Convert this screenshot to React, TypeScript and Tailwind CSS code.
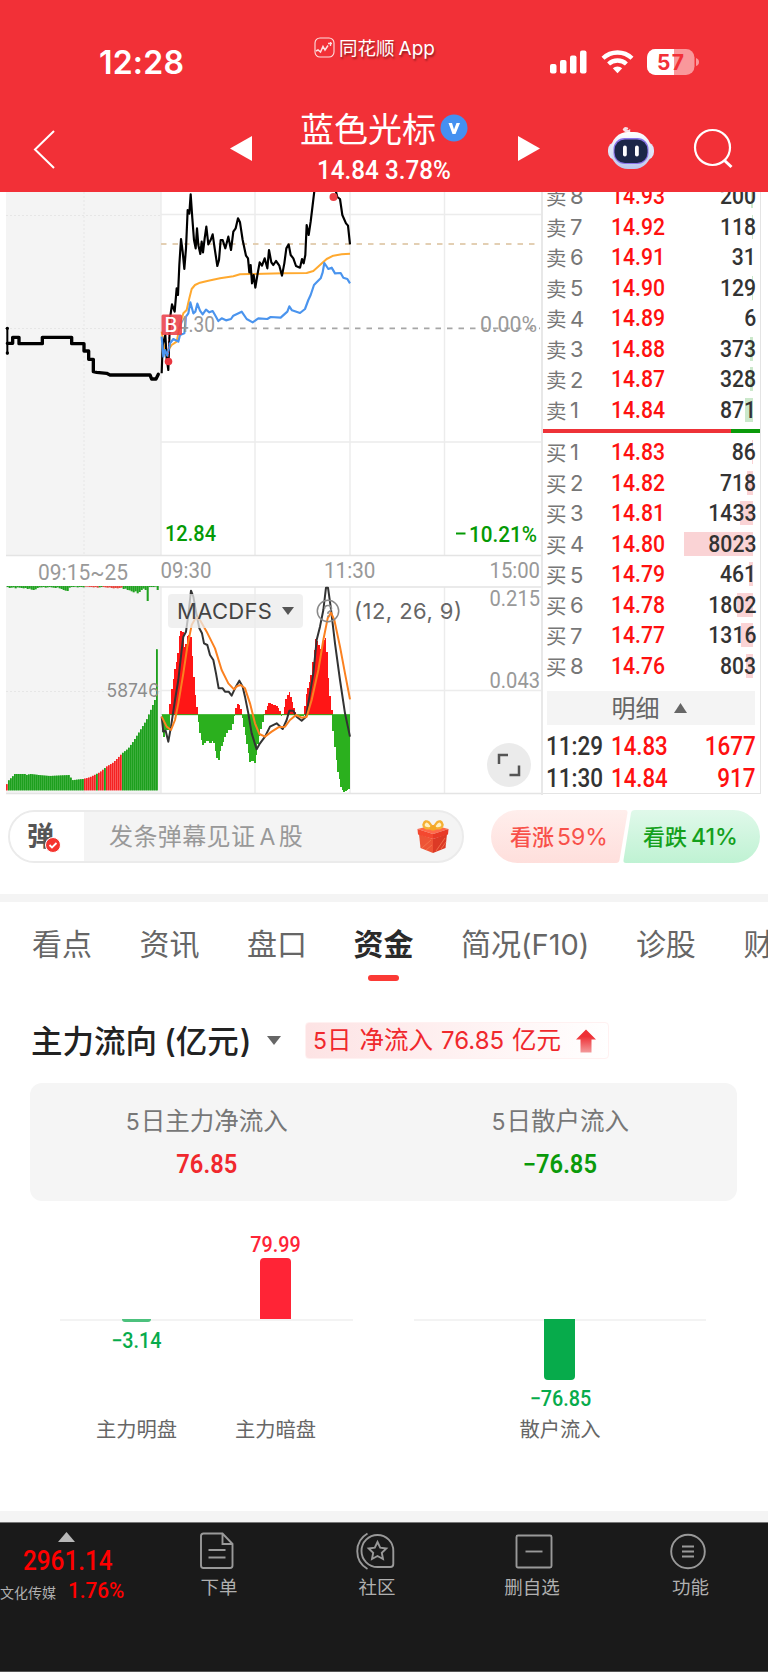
import React from "react";

interface Quote {
  label: string;
  no: number;
  price: string;
  volume: string;
  bar: number;
}

const asks: Quote[] = [
  { label: "卖", no: 8, price: "14.93", volume: "200", bar: 2 },
  { label: "卖", no: 7, price: "14.92", volume: "118", bar: 1 },
  { label: "卖", no: 6, price: "14.91", volume: "31", bar: 0 },
  { label: "卖", no: 5, price: "14.90", volume: "129", bar: 1 },
  { label: "卖", no: 4, price: "14.89", volume: "6", bar: 0 },
  { label: "卖", no: 3, price: "14.88", volume: "373", bar: 3 },
  { label: "卖", no: 2, price: "14.87", volume: "328", bar: 3 },
  { label: "卖", no: 1, price: "14.84", volume: "871", bar: 8 },
];

const bids: Quote[] = [
  { label: "买", no: 1, price: "14.83", volume: "86", bar: 1 },
  { label: "买", no: 2, price: "14.82", volume: "718", bar: 6 },
  { label: "买", no: 3, price: "14.81", volume: "1433", bar: 13 },
  { label: "买", no: 4, price: "14.80", volume: "8023", bar: 69 },
  { label: "买", no: 5, price: "14.79", volume: "461", bar: 4 },
  { label: "买", no: 6, price: "14.78", volume: "1802", bar: 16 },
  { label: "买", no: 7, price: "14.77", volume: "1316", bar: 12 },
  { label: "买", no: 8, price: "14.76", volume: "803", bar: 7 },
];

const trades = [
  { time: "11:29", price: "14.83", volume: "1677" },
  { time: "11:30", price: "14.84", volume: "917" },
];

const priceLine =
  "35,565 38,480 46,450 50,520 55,555 60,400 66,358 74,380 80,310 84,330 88,240 93,162 98,200 103,252 108,190 113,75 118,86 122,28 127,100 132,165 137,190 141,130 145,180 151,207 155,170 159,202 164,160 169,125 175,178 182,165 188,148 194,190 202,243 207,225 212,165 218,165 226,190 235,155 243,195 250,140 257,130 264,100 270,112 278,165 288,212 294,220 298,262 302,240 306,295 311,270 316,308 323,265 329,232 336,242 344,220 352,250 357,195 364,232 370,240 378,228 388,242 396,272 403,235 409,190 416,178 422,210 430,220 438,243 450,248 456,222 461,235 466,210 470,120 476,150 482,110 488,60 494,10 520,-40 550,-10 562,36 570,42 577,90 588,115 594,122 600,178";

const averageLine =
  "35,440 45,500 55,495 65,480 80,470 90,420 100,385 110,375 118,340 125,312 135,300 150,293 175,287 210,280 250,274 270,268 300,267 400,265 470,264 490,258 510,240 530,222 550,212 575,208 600,206";

const indexLine =
  "35,455 40,515 45,495 52,512 60,475 70,462 85,470 90,450 103,445 108,395 115,385 121,352 130,385 136,380 142,356 150,377 158,388 168,374 178,382 188,378 195,390 205,408 215,400 228,406 243,402 250,392 275,380 290,402 308,412 325,400 352,402 362,396 392,398 412,380 418,364 426,376 450,384 465,372 475,345 482,330 492,300 500,292 512,280 518,262 523,234 535,252 545,248 555,265 572,264 580,278 592,282 600,295";

const auctionLine =
  "22,475 38,475 38,457 57,457 57,476 127,476 127,457 215,457 215,476 252,476 252,498 266,498 266,523 280,523 280,560 290,562 320,565 330,570 450,570 455,582 468,582 475,568";

const difLine =
  "485,530 490,575 497,572 505,605 513,560 525,480 535,420 545,330 550,290 558,275 565,225 573,152 580,170 588,215 598,265 606,280 612,310 622,315 630,345 640,360 648,400 656,445 668,445 675,455 686,455 695,467 705,445 718,422 728,440 735,470 745,520 755,580 770,628 780,610 795,590 810,560 830,550 848,567 860,540 868,512 880,512 890,530 905,542 918,530 930,460 940,400 950,300 960,260 970,210 978,143 984,143 992,200 1005,310 1020,420 1035,520 1050,590";

const deaLine =
  "485,530 500,560 513,570 525,540 535,490 550,400 562,320 575,255 588,232 600,240 620,275 645,325 665,390 685,430 702,448 712,438 722,435 735,445 750,490 765,550 778,582 795,590 815,575 835,562 855,560 870,540 888,525 905,533 920,530 935,480 955,390 970,300 983,235 993,218 1003,240 1020,320 1035,400 1050,478";

type Point = [number, number];

const MACD_ZERO = 524;

const macdShape: Point[] = [
  [485, 560], [490, 600], [496, 570], [508, 570], [509, 524], [511, 480], [517, 435], [525, 385],
  [533, 350], [540, 273], [549, 275], [554, 335], [561, 290], [571, 283], [575, 330], [580, 400],
  [585, 460], [592, 512], [594, 540], [600, 580], [608, 618], [620, 600], [630, 612], [640, 600],
  [648, 640], [655, 668], [660, 635], [672, 600], [683, 570], [695, 570], [703, 530], [706, 510],
  [714, 488], [724, 512], [727, 535], [735, 580], [742, 620], [750, 665], [758, 660], [766, 672],
  [772, 620], [780, 580], [788, 545], [792, 522], [808, 485], [820, 495], [832, 497], [841, 518],
  [846, 534], [851, 512], [860, 470], [867, 455], [875, 480], [884, 510], [890, 528], [912, 528],
  [917, 470], [925, 440], [933, 410], [940, 350], [948, 295], [955, 310], [965, 335], [970, 300],
  [978, 290], [984, 400], [990, 470], [995, 515], [999, 570], [1006, 640], [1014, 700],
  [1024, 745], [1032, 757], [1040, 750], [1048, 745],
];

const auctionVolume: Point[] = [
  [18, 741], [24, 724], [36, 712], [45, 702], [75, 702], [80, 705], [92, 702], [125, 706], [150, 708],
  [212, 705], [214, 721], [250, 717], [270, 712], [300, 697], [320, 680], [340, 668], [355, 653],
  [367, 640], [385, 626], [400, 605], [420, 573], [440, 540], [455, 505], [465, 480], [469, 460],
  [470, 328], [480, 328],
];

const valueAt = (shape: Point[], x: number) => {
  for (let i = 1; i < shape.length; i++) {
    const [x0, y0] = shape[i - 1];
    const [x1, y1] = shape[i];
    if (x <= x1) return y0 + ((y1 - y0) * (x - x0)) / (x1 - x0);
  }
  return shape[shape.length - 1][1];
};

const macdBars = Array.from({ length: 120 }, (_, i) => {
  const x = 485 + i * 4.7;
  return { x, y: valueAt(macdShape, x + 2) };
});

const volumeBars = Array.from({ length: 76 }, (_, i) => {
  const x = 18 + i * 6;
  const red = i === 0 || (x > 248 && x < 366 && ![45, 49].includes(i));
  return { x, y: valueAt(auctionVolume, x + 3), red };
});

const unmatched = [
  3, 6, 5, 4, 7, 4, 5, 6, 7, 6, 9, 8, 11, 12, 10, 6, 4, 4, 3, 5, 4, 3, 4, 5, 6, 4, 7, 9, 12, 14,
  15, 5, 3, 3, 2, 4, 3, 3, 4, 2, 2, 3, 3, 4, 3, 5, 4, 3, 3, 4, 5, 4, 6, 7, 6, 7, 6, 5, 9, 8, 12,
  13, 16, 19, 16, 22, 18, 12, 8, 12, 45, 3, 3, 3, 2, 12,
];

const axisText = "fill-[#999] font-['Roboto'] text-[22px]";

interface LabelProps {
  x: number;
  y: number;
  w: number;
  className?: string;
  children: string;
}

const Label: React.FC<LabelProps> = ({ x, y, w, className = axisText, children }) => (
  <text x={x} y={y} textLength={w} lengthAdjust="spacingAndGlyphs" className={className}>
    {children}
  </text>
);

const StatusBar: React.FC = () => (
  <div className="flex h-[104px] justify-between pr-[69px] pl-[99px]">
    <div className="w-[188px] pt-[47px] font-['Inter'] text-[32px] leading-8 font-semibold tracking-[0.2px]">
      12:28
    </div>
    <div className="mt-[37px] mr-[88px] flex h-5 items-center gap-1">
      <svg width="21" height="21" viewBox="0 0 21 21" fill="none" stroke="#fff" strokeOpacity=".85">
        <rect x="1" y="1" width="19" height="19" rx="5" strokeWidth="1.1" />
        <path d="M2 14 L4 13 L6.500 15 L9 9.500 L11 13 L14 8.500" strokeWidth="1.500" />
        <path d="M14 6.500 H18 M16.500 5 V9" strokeWidth="1.300" />
      </svg>
      <span className="pt-px text-[18.500px] leading-5 whitespace-nowrap [text-shadow:1px_2px_2px_rgba(0,0,0,.4)]">
        同花顺<span className="ml-1 font-['Inter'] text-[19px]">App</span>
      </span>
    </div>
    <div className="mt-[49px] flex h-[26px] items-center">
      <svg width="37" height="24" viewBox="0 0 37 24" fill="#fff">
        <rect x="0" y="14" width="6.500" height="9.500" rx="2" />
        <rect x="10" y="10" width="6.500" height="13.500" rx="2" />
        <rect x="20" y="5.500" width="6.500" height="18" rx="2" />
        <rect x="30" y="0.500" width="6.500" height="23" rx="2" />
      </svg>
      <svg className="ml-[14px]" width="33" height="24" viewBox="0 0 33 24" fill="none" stroke="#fff" strokeWidth="4.300">
        <path d="M2 8.300 A21 21 0 0 1 31 8.300" />
        <path d="M7.600 14 A13 13 0 0 1 25.400 14" />
        <path d="M11.800 18.300 A6.800 6.800 0 0 1 21.200 18.300 L16.500 23.200 Z" fill="#fff" stroke="none" />
      </svg>
      <svg className="ml-[13px]" width="52" height="26" viewBox="0 0 52 26">
        <defs>
          <clipPath id="charge">
            <rect width="27" height="26" />
          </clipPath>
        </defs>
        <rect width="47.500" height="26" rx="8.500" fill="#fff" fillOpacity=".5" />
        <rect width="47.500" height="26" rx="8.500" fill="#fff" clipPath="url(#charge)" />
        <path d="M49 9 Q52 10 52 13 Q52 16 49 17 Z" fill="#fff" fillOpacity=".5" />
        <text x="10" y="20.500" textLength="27" className="fill-[#f23037] font-['Inter'] text-[21px] font-bold">
          57
        </text>
      </svg>
    </div>
  </div>
);

const Robot: React.FC = () => (
  <svg width="48" height="44" viewBox="0 0 48 44">
    <defs>
      <linearGradient id="shell" x1="0" y1="0" x2="0" y2="1">
        <stop offset="0" stopColor="#fff" />
        <stop offset="1" stopColor="#bcc8ec" />
      </linearGradient>
    </defs>
    <path d="M22 9 V5 Q20 6 17.500 4 M17 3.500 Q18 1.500 20 2.500" fill="none" stroke="#f6dfe6" strokeWidth="2.400" strokeLinecap="round" />
    <rect x="1" y="16" width="46" height="18" rx="8" fill="#dfe4f8" />
    <rect x="4" y="6" width="40" height="37" rx="17" fill="url(#shell)" />
    <rect x="6.500" y="12" width="35" height="26" rx="11" fill="#8a74e8" />
    <rect x="7.500" y="13.500" width="33" height="23.500" rx="10.500" fill="#1c2748" />
    <rect x="16" y="19.500" width="3.800" height="11" rx="1.900" fill="#fff" />
    <rect x="28" y="19.500" width="3.800" height="11" rx="1.900" fill="#fff" />
  </svg>
);

const Header: React.FC = () => (
  <header className="h-[192px] bg-[#f23037] text-white">
    <StatusBar />
    <div className="flex h-[88px]">
      <svg className="mt-[26px] ml-[33px]" width="24" height="39" viewBox="0 0 24 39" fill="none" stroke="#fff" strokeWidth="2">
        <path d="M21 1 L2 19.500 L21 38" />
      </svg>
      <svg className="mt-[32px] ml-[173px]" width="22" height="25" viewBox="0 0 22 25" fill="#fff">
        <path d="M0 12.500 L22 0 V25 Z" />
      </svg>
      <div className="ml-[48px] w-[174px]">
        <div className="flex items-center pt-[5px]">
          <span className="text-[34px] leading-[38px]">蓝色光标</span>
          <svg className="ml-[4px]" width="28" height="28" viewBox="0 0 28 28">
            <circle cx="14" cy="14" r="13.500" fill="#4590f0" />
            <path d="M8.500 9 H12 L14 15.500 L16.500 9 H20 L15.500 20 H12.500 Z" fill="#fff" />
          </svg>
        </div>
        <div className="mt-[7px] ml-[17px] origin-left scale-x-[.97] font-['Roboto'] text-[25px] leading-[34px] font-medium whitespace-nowrap">
          14.84 3.78%
        </div>
      </div>
      <svg className="mt-[32px] ml-[44px]" width="22" height="25" viewBox="0 0 22 25" fill="#fff">
        <path d="M22 12.500 L0 0 V25 Z" />
      </svg>
      <div className="mt-[22px] ml-[67px]">
        <Robot />
      </div>
      <svg className="mt-[24px] ml-[38px]" width="42" height="42" viewBox="0 0 42 42" fill="none" stroke="#fff" strokeWidth="2.200">
        <circle cx="19.500" cy="19.500" r="17.500" />
        <path d="M31.500 32.500 L38.500 39" strokeWidth="3" />
      </svg>
    </div>
  </header>
);

const Chart: React.FC = () => (
  <div className="relative h-[603px] w-[541px]">
    <svg width="541" height="603" viewBox="0 192 541 603" fill="none">
      <rect x="6" y="192" width="155" height="363" fill="#f4f4f4" />
      <rect x="6" y="586" width="155" height="207" fill="#f4f4f4" />
      <g stroke="#e6e6e6" strokeDasharray="2 2">
        <path d="M84 192 V555 M84 587 V793 M6 215.500 H161 M6 328.500 H161 M6 691.500 H161" />
      </g>
      <g stroke="#ececec" strokeWidth="1.400">
        <path d="M161 192 V555 M255 192 V555 M350 192 V555 M444.500 192 V555" />
        <path d="M161 587 V793 M255 587 V793 M350 587 V793 M444.500 587 V793" />
        <path d="M161 214.500 H541 M161 442 H541 M161 690.500 H541" />
        <path d="M6 555.500 H541 M6 587 H541 M6 793.500 H541" stroke="#e4e4e4" />
      </g>
      <path d="M161 244 H540" stroke="#e3cfb3" strokeWidth="1.800" strokeDasharray="5.500 6" />
      <path d="M217 328.300 H540" stroke="#a6a6a6" strokeWidth="1.800" strokeDasharray="5.500 6" />

      {/* call auction */}
      <g transform="translate(0 185) scale(.33333)" stroke="#000" strokeLinejoin="round">
        <path d="M22 428 V508" strokeWidth="6" />
        <polyline points={auctionLine} strokeWidth="10" strokeLinecap="round" />
        <circle cx="22" cy="430" r="5" fill="#000" stroke="none" />
        <circle cx="22" cy="504" r="5" fill="#000" stroke="none" />
      </g>

      {/* intraday lines */}
      <g transform="translate(150 185) scale(.33333)" strokeLinejoin="round">
        <polyline points={averageLine} stroke="#ffa92f" strokeWidth="6" />
        <polyline points={priceLine} stroke="#000" strokeWidth="6.500" />
        <polyline points={indexLine} stroke="#4a94ee" strokeWidth="6.500" />
      </g>
      <Label x={167} y={332} w={48}>14.30</Label>
      <circle cx="333.500" cy="197" r="4" fill="#ee4148" />
      <circle cx="168.500" cy="361.500" r="3.800" fill="#e8363f" />
      <path d="M168.500 335 V360" stroke="#e8363f" strokeOpacity=".5" strokeDasharray="2 2" />
      <rect x="161.500" y="314.500" width="20.500" height="20.500" rx="1.500" fill="#ea3b45" fillOpacity=".86" />
      <text x="164.500" y="332" className="fill-white font-['Inter'] text-[19.500px] font-medium">B</text>

      <Label x={480} y={332} w={57}>0.00%</Label>
      <Label x={165} y={541} w={51} className="fill-[#059a05] font-['Roboto'] text-[22px] font-medium">12.84</Label>
      <rect x="456" y="532.500" width="9.500" height="2" fill="#059a05" />
      <Label x={469} y={541.5} w={68} className="fill-[#059a05] font-['Roboto'] text-[22px] font-medium">10.21%</Label>
      <Label x={38} y={579.5} w={90}>09:15~25</Label>
      <Label x={160.5} y={577.5} w={51}>09:30</Label>
      <Label x={324} y={577.5} w={51.5}>11:30</Label>
      <Label x={489.5} y={577.5} w={50.5}>15:00</Label>

      <g transform="translate(0 540) scale(.33333)">
        {unmatched.map((h, i) => (
          <rect key={i} x={20 + i * 6} y={138} width="6.200" height={h} fill={(i > 38 && i < 46) || (i > 47 && i < 58) ? "#e8453c" : "#21a321"} />
        ))}
        {volumeBars.map(({ x, y, red }) => (
          <g key={x}>
            <rect x={x} y={y} width="6" height={751 - y} fill={red ? "#f98080" : "#58bb55"} />
            <rect x={x} y={y} width="4.300" height={751 - y} fill={red ? "#f52222" : "#1d9f1d"} />
          </g>
        ))}
        {macdBars.map(({ x, y }) => (
          <rect key={x} x={x} y={Math.min(y, MACD_ZERO)} width="5" height={Math.abs(y - MACD_ZERO)} fill={y < MACD_ZERO ? "#ff1616" : "#2bb01e"} shapeRendering="crispEdges" />
        ))}
        <path d="M485 524 H1050" stroke="#2bb01e" strokeWidth="3" />
        <polyline points={difLine} stroke="#333" strokeWidth="6" strokeLinejoin="round" />
        <polyline points={deaLine} stroke="#fb8120" strokeWidth="6" strokeLinejoin="round" />
      </g>
      <text x="106.500" y="697" textLength="52.500" lengthAdjust="spacingAndGlyphs" className="fill-[#8c8c8c] font-['Inter'] text-[18px]">58746</text>
      <Label x={489.5} y={605.5} w={50.5}>0.215</Label>
      <Label x={489.5} y={688} w={50.5}>0.043</Label>
      <text x="354" y="619" textLength="108" className="fill-[#666] font-['Inter'] text-[22px]">(12, 26, 9)</text>
      <circle cx="328" cy="611" r="10.700" stroke="#8a8a8a" strokeWidth="1.500" />
      <path d="M324.500 609 Q324.500 605.500 328 605.500 Q331.500 605.500 331.500 608.500 Q331.500 610.500 328 612.500 V614 M328 615.500 V617" stroke="#8a8a8a" strokeWidth="1.500" />
    </svg>

    <button className="absolute top-[402px] left-[168px] flex h-[34px] w-[135px] items-center rounded-sm bg-[#ebebeb]/75 pl-[9px]">
      <span className="w-[105px] text-left font-['Inter'] text-[22px] leading-none tracking-[0.300px] text-[#444]">MACDFS</span>
      <svg width="12" height="8" viewBox="0 0 12 8" fill="#555">
        <path d="M0 0 H12 L6 8 Z" />
      </svg>
    </button>
    <button className="absolute top-[551px] left-[487px] flex size-[44px] items-center justify-center rounded-full bg-[#ebebeb]">
      <svg width="24" height="24" viewBox="0 0 24 24" fill="none" stroke="#555" strokeWidth="2.500">
        <path d="M2 11 V2 H11 M22 12.500 V22 H12.500" />
      </svg>
    </button>
  </div>
);

const QuoteRow: React.FC<{ quote: Quote; barClass: string }> = ({ quote, barClass }) => (
  <div className="relative flex h-[30.570px] items-center">
    <span className="w-[24px] text-[20.500px] leading-none text-[#777]">{quote.label}</span>
    <span className="w-[41px] font-['Inter'] text-[22px] leading-none text-[#777]">{quote.no}</span>
    <span className="origin-left scale-x-[.9] pt-px font-['Roboto'] text-[23.500px] leading-none font-medium text-[#ff1010]">
      {quote.price}
    </span>
    <span className={`absolute top-[3px] right-[15px] h-6 ${barClass}`} style={{ width: quote.bar }} />
    <span className="relative mr-[12px] ml-auto origin-right scale-x-[.9] pt-px font-['Roboto'] text-[23.500px] leading-none font-medium text-[#333]">
      {quote.volume}
    </span>
  </div>
);

const OrderBook: React.FC = () => (
  <div className="flex h-[603px] flex-1 overflow-hidden">
    <div className="w-0.5 bg-[#e8e8e8]" />
    <div className="h-[602px] w-[218px] border-r border-b border-[#e4e4e4]">
      <div className="-mt-[11px] -mr-[8px] pl-[3px]">
        {asks.map((quote) => (
          <QuoteRow key={quote.no} quote={quote} barClass="bg-[#cbe8cb]" />
        ))}
      </div>
      <div className="mt-[3.500px] flex h-1">
        <div className="w-[188px] bg-[#ee3238]" />
        <div className="flex-1 bg-[#0a9a0a]" />
      </div>
      <div className="mt-[4px] -mr-[8px] pl-[3px]">
        {bids.map((quote) => (
          <QuoteRow key={quote.no} quote={quote} barClass="bg-[#fad3d5]" />
        ))}
      </div>
      <div className="mt-[9px] ml-[4px] flex h-[34px] w-[208px] items-center justify-center gap-[14px] bg-[#f4f4f4] pr-[4px] text-[24px] text-[#666]">
        <span className="-mt-[2px] leading-none">明细</span>
        <svg width="13" height="10" viewBox="0 0 13 10" fill="#666">
          <path d="M6.500 0 L13 10 H0 Z" />
        </svg>
      </div>
      <div className="mt-[6px] -mr-[8px] pl-[3px] font-['Roboto'] text-[25px] font-medium">
        {trades.map((trade) => (
          <div key={trade.time} className="flex h-[32.300px] items-center text-[#ff1010]">
            <span className="w-[65px] origin-left scale-x-[.9] leading-none text-[#333]">{trade.time}</span>
            <span className="origin-left scale-x-[.89] leading-none">{trade.price}</span>
            <span className="mr-[12px] ml-auto origin-right scale-x-[.9] leading-none">{trade.volume}</span>
          </div>
        ))}
      </div>
    </div>
  </div>
);

const Gift: React.FC = () => (
  <svg width="32" height="34" viewBox="0 0 32 34">
    <path d="M2 14 L16 19 V33 L3.500 28 Z" fill="#ee5436" />
    <path d="M30 14 L16 19 V33 L28.500 28 Z" fill="#dc3a26" />
    <path d="M0.500 9 L16 5 L31.500 9 L16 14 Z" fill="#ff6a4a" />
    <path d="M0.500 9 L16 14 V19 L1 14.500 Z" fill="#f4482f" />
    <path d="M31.500 9 L16 14 V19 L31 14.500 Z" fill="#e83a27" />
    <path d="M5 28 L14 20 M9 30 L15 25 M19 31 L28 18 M24 29 L29 22" stroke="#f47a52" strokeWidth="0.800" />
    <path d="M15 8 Q6 9.500 6.500 4.500 Q8 -0.500 12 2.500 Q14.500 5 15 8 Z M17 8 Q26 9.500 25.500 4.500 Q24 -0.500 20 2.500 Q17.500 5 17 8 Z" fill="#fff0c0" stroke="#f5b033" strokeWidth="2.400" />
    <rect x="13" y="5.500" width="6" height="5" rx="2" fill="#f3a723" />
  </svg>
);

const BarrageBar: React.FC = () => (
  <div className="flex h-[99px] pt-[15px] pl-[8px]">
    <div className="flex h-[53px] w-[456px] items-center overflow-hidden rounded-full border-2 border-[#ebebeb] bg-[#f4f4f4]">
      <div className="relative h-full w-[74px] bg-white pl-[17px]">
        <span className="text-[27px] leading-[45px] font-bold text-[#555]">弹</span>
        <svg className="absolute top-[25px] left-[35px]" width="16" height="16" viewBox="0 0 16 16">
          <circle cx="8" cy="8" r="7.500" fill="#f5352f" stroke="#fff" />
          <path d="M4.500 8 L7 10.500 L11.500 6" fill="none" stroke="#fff" strokeWidth="1.800" />
        </svg>
      </div>
      <span className="-mt-px ml-[25px] text-[24px] leading-none tracking-[0.400px] text-[#999]">发条弹幕见证<span className="mr-[3px] ml-[4px] font-['Inter'] text-[23px]">A</span>股</span>
      <div className="mr-[13px] ml-auto">
        <Gift />
      </div>
    </div>
    <div className="relative ml-[27px] h-[53px] w-[270px]">
      <svg width="270" height="54" viewBox="0 0 270 54">
        <defs>
          <linearGradient id="up" x1="0" y1="0" x2="0" y2="1">
            <stop offset="0" stopColor="#ffeeec" />
            <stop offset="1" stopColor="#fedfdc" />
          </linearGradient>
          <linearGradient id="down" x1="0" y1="0" x2="0" y2="1">
            <stop offset="0" stopColor="#e0f9ea" />
            <stop offset="1" stopColor="#bff2d3" />
          </linearGradient>
        </defs>
        <path d="M26.500 0 H134 Q137 0 136.500 3 L128.500 50 Q128 53 125 53 H26.500 A26.500 26.500 0 0 1 26.500 0 Z" fill="url(#up)" />
        <path d="M144 0 H242.500 A26.500 26.500 0 0 1 242.500 53 H135 Q132 53 132.500 50 L140 3 Q140.500 0 144 0 Z" fill="url(#down)" />
      </svg>
      <div className="absolute inset-x-0 top-0 flex h-[53px] items-center text-[22px] font-medium whitespace-nowrap">
        <span className="ml-[19px] w-[133px] text-[#f8514a]">看涨<span className="ml-[3px] font-['Inter'] text-[23px] font-normal">59%</span></span>
        <span className="text-[#14a01c]">看跌<span className="ml-[4px] font-['Inter'] text-[23px]">41%</span></span>
      </div>
    </div>
  </div>
);

const Tabs: React.FC = () => (
  <nav className="flex h-[108px] gap-[47.500px] overflow-hidden pt-[19px] pl-[32px] text-[30px] leading-[42px] whitespace-nowrap text-[#666]">
    <span>看点</span>
    <span>资讯</span>
    <span>盘口</span>
    <div className="-ml-px flex flex-col items-center">
      <span className="font-bold text-[#2a2a2a]">资金</span>
      <span className="mt-[12px] h-[6px] w-[31px] rounded-full bg-[#fb3a35]" />
    </div>
    <span>简况<span className="font-['Inter'] text-[29px]">(F10)</span></span>
    <span className="-ml-px">诊股</span>
    <span>财务</span>
  </nav>
);

const flows = [
  { title: "5日主力净流入", value: "76.85", color: "text-[#f0282d]" },
  { title: "5日散户流入", value: "−76.85", color: "text-[#0a9a0a]" },
];

interface FlowBarProps {
  name: string;
  value: string;
  height: number;
}

const FlowBar: React.FC<FlowBarProps> = ({ name, value, height }) => {
  const up = height > 0;
  return (
    <div className="flex w-[139px] flex-col items-center">
      <div className="flex h-[88px] flex-col items-center justify-end">
        {up && (
          <>
            <span className="mb-[1px] scale-x-[.92] font-['Roboto'] text-[21.500px] leading-[24px] font-medium text-[#ff2436]">{value}</span>
            <div className="w-[31px] rounded-t-[4px] bg-[#ff2436]" style={{ height }} />
          </>
        )}
      </div>
      <div className="flex h-[97px] flex-col items-center">
        {!up && (
          <>
            <div className={height < -5 ? "w-[31px] rounded-b-[4px] bg-[#07ab4b]" : "w-[29px] rounded-b-sm bg-[#4cc17d]"} style={{ height: -height }} />
            <span className="mt-[7px] scale-x-[.92] font-['Roboto'] text-[21.500px] leading-[24px] font-medium text-[#07ab4b]">{value}</span>
          </>
        )}
      </div>
      <span className="text-[20.300px] leading-[24px] text-[#666]">{name}</span>
    </div>
  );
};

const FundFlow: React.FC = () => (
  <section className="h-[501px]">
    <div className="flex h-[73px] items-start pl-[31px]">
      <h2 className="w-[220px] text-[31.500px] leading-[58px] font-medium whitespace-nowrap text-[#222]">
        主力流向<span className="ml-[7px] font-['Inter'] text-[32px]">(</span>亿元<span className="ml-px font-['Inter'] text-[32px]">)</span>
      </h2>
      <svg className="mt-[26px] ml-[16px]" width="14" height="9" viewBox="0 0 14 9" fill="#666">
        <path d="M0 0 H14 L7 9 Z" />
      </svg>
      <div className="mt-[12px] ml-[24px] flex h-[37px] w-[304px] items-center rounded-[4px] border border-[#fff1f1] bg-linear-to-r from-[#fde3e4] to-white pl-[7px] whitespace-nowrap text-[#f0282d]">
        <span className="-mt-px w-[250px] text-[24.500px] leading-none">
          <span className="font-['Inter'] text-[23px]">5</span>日<span className="ml-[8px]">净流入</span>
          <span className="mx-[8px] font-['Inter'] text-[24px]">76.85</span>亿元
        </span>
        <svg className="ml-[13px]" width="20" height="24" viewBox="0 0 20 24">
          <defs>
            <linearGradient id="arrow" x1="0" y1="0" x2="0" y2="1">
              <stop offset=".3" stopColor="#ee2f35" />
              <stop offset="1" stopColor="#f39a9b" />
            </linearGradient>
          </defs>
          <path d="M10 0.500 L20 10.500 H15.500 V23.500 H4.500 V10.500 H0 Z" fill="url(#arrow)" />
        </svg>
      </div>
    </div>
    <div className="mr-[31px] ml-[30px] flex h-[118px] rounded-xl bg-[#f5f5f5]">
      {flows.map((flow) => (
        <div key={flow.title} className="flex flex-1 flex-col items-center pt-[21px]">
          <span className="text-[24.500px] leading-[32px] text-[#777]">
            <span className="mr-[1px] font-['Inter'] text-[23px]">5</span>
            {flow.title.slice(1)}
          </span>
          <span className={`mt-[10px] scale-x-[.93] font-['Roboto'] text-[25.500px] leading-[32px] font-semibold ${flow.color}`}>
            {flow.value}
          </span>
        </div>
      ))}
    </div>
    <div className="flex pt-[30px] pl-[60px]">
      <div className="flex w-[293px] bg-[linear-gradient(#f3f3f3,#f3f3f3)] bg-[length:100%_2px] bg-[position:0_88px] bg-no-repeat pl-[7px]">
        <FlowBar name="主力明盘" value="−3.14" height={-2.5} />
        <FlowBar name="主力暗盘" value="79.99" height={61} />
      </div>
      <div className="ml-[61px] flex w-[292px] justify-center bg-[linear-gradient(#f3f3f3,#f3f3f3)] bg-[length:100%_2px] bg-[position:0_88px] bg-no-repeat">
        <FlowBar name="散户流入" value="−76.85" height={-61} />
      </div>
    </div>
  </section>
);

const BottomBar: React.FC = () => (
  <footer className="flex h-[150px] border-t border-b border-t-[#777] border-b-[#555] bg-[#1a1a1a] text-[18.500px] text-[#b0b0b0]">
    <div className="w-[138px] pt-[9px]">
      <svg className="ml-[58px]" width="17" height="10" viewBox="0 0 17 10" fill="#b8b8b8">
        <path d="M8.500 0 L17 10 H0 Z" />
      </svg>
      <div className="mt-[3px] ml-[23px] origin-left scale-x-[.9] font-['Roboto'] text-[27px] leading-[32px] font-medium text-[#f00]">2961.14</div>
      <div className="flex items-center">
        <span className="w-[68px] pt-[2px] text-[14px] leading-[26px]">文化传媒</span>
        <span className="origin-left scale-x-[.94] font-['Roboto'] text-[22px] leading-[26px] font-medium text-[#f00]">1.76%</span>
      </div>
    </div>
    <div className="flex w-[162px] flex-col items-center pt-[9px]">
      <svg className="-ml-[4px]" width="36" height="38" viewBox="0 0 36 38" fill="none" stroke="#999" strokeWidth="1.900">
        <path d="M2 4 Q2 1.500 4.500 1.500 H23.500 L33.500 12 V33.500 Q33.500 36 31 36 H4.500 Q2 36 2 33.500 Z M23.500 1.500 V12 H33.500 M9.500 18 H26.500 M9.500 25.500 H26.500" />
      </svg>
      <span className="mt-[4px] leading-[24px]">下单</span>
    </div>
    <div className="flex w-[154px] flex-col items-center pt-[9px]">
      <svg className="-ml-[5px]" width="40" height="38" viewBox="0 0 40 38" fill="none" stroke="#999" strokeWidth="1.900">
        <path d="M12.500 1.500 A20.500 20.500 0 0 0 12.500 37" />
        <path d="M22.500 3 A15.800 15.800 0 0 1 38.300 19 V32 Q38.300 35 35.300 35 H22.500 A16 16 0 0 1 22.500 3 Z" />
        <path d="M22.500 10 L25.200 15.700 L31.300 16.500 L26.800 20.800 L28 27 L22.500 24 L17 27 L18.200 20.800 L13.700 16.500 L19.800 15.700 Z" />
      </svg>
      <span className="mt-[4px] leading-[24px]">社区</span>
    </div>
    <div className="flex w-[156px] flex-col items-center pt-[9px]">
      <svg className="ml-[3px]" width="38" height="38" viewBox="0 0 38 38" fill="none" stroke="#999" strokeWidth="1.900">
        <rect x="1.500" y="3.500" width="35" height="32" rx="1.500" />
        <path d="M10.500 19.500 H27.500" />
      </svg>
      <span className="mt-[4px] leading-[24px]">删自选</span>
    </div>
    <div className="flex w-[158px] flex-col items-center pt-[9px]">
      <svg className="-ml-[2px]" width="38" height="38" viewBox="0 0 38 38" fill="none" stroke="#999" strokeWidth="1.900">
        <circle cx="19" cy="19.500" r="16.800" />
        <path d="M13 14.500 H25 M13 19.500 H25 M13 24.500 H25" />
      </svg>
      <span className="mt-[4px] ml-[3px] leading-[24px]">功能</span>
    </div>
  </footer>
);

const App: React.FC = () => {
  return (
    <div className="h-[1672px] w-[768px] overflow-hidden bg-white font-['Noto_Sans_CJK_SC',sans-serif]">
      <Header />
      <main>
        <div className="flex">
          <Chart />
          <OrderBook />
        </div>
        <BarrageBar />
        <div className="h-[8px] bg-[#f4f4f4]" />
        <Tabs />
        <FundFlow />
        <div className="h-[11px] bg-[#f4f4f4]" />
      </main>
      <BottomBar />
    </div>
  );
};

export default App;
